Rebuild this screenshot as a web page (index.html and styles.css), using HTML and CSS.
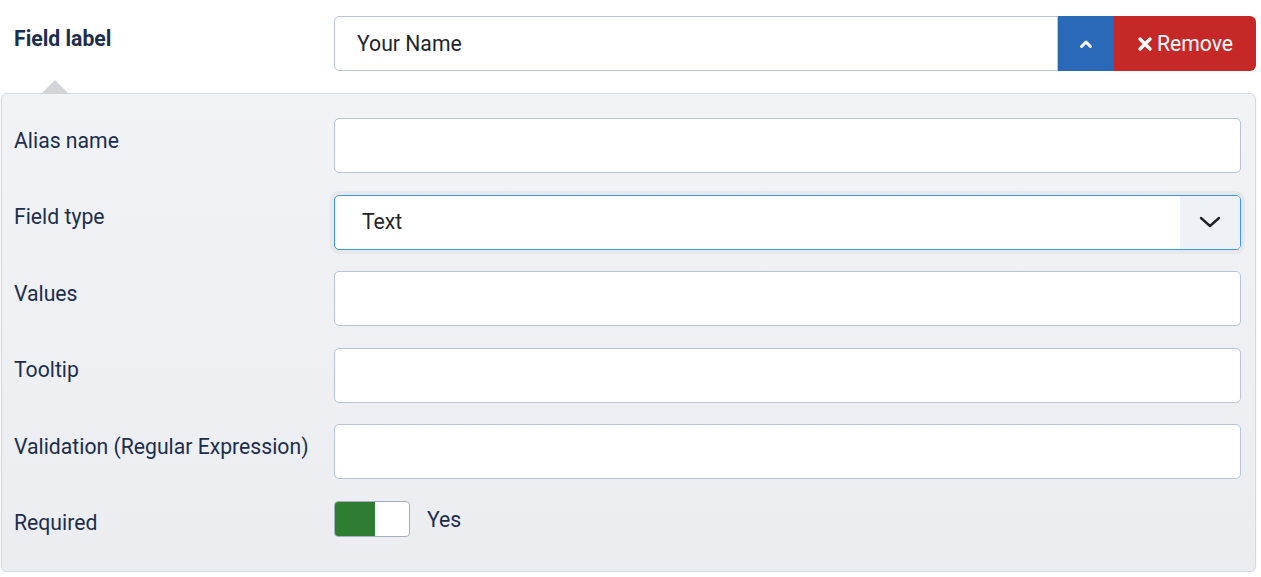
FILE: index.html
```html
<!DOCTYPE html>
<html>

<head>
    <meta name="viewport" content="width=device-width, initial-scale=1">
    <link rel="stylesheet" href="styles.css">
</head>

<body>

    <div class="field-head">
        <label class="head-label" for="fieldLabel">Field label</label>
        <div class="input-group">
            <input type="text" id="fieldLabel" class="form-control" value="Your Name">
            <button class="btn btn-up" type="button" aria-label="Collapse">
                <svg width="14" height="10" viewBox="0 0 14 10">
                    <path d="M2.5 7.5 L7 3 L11.5 7.5" fill="none" stroke="#fff" stroke-width="3" stroke-linecap="round" stroke-linejoin="round" />
                </svg>
            </button>
            <button class="btn btn-remove" type="button">
                <svg width="16" height="16" viewBox="0 0 16 16">
                    <path d="M3 3 L13 13 M13 3 L3 13" fill="none" stroke="#fff" stroke-width="3.4" stroke-linecap="round" />
                </svg>
                Remove
            </button>
        </div>
    </div>

    <div class="panel">
        <div class="row">
            <label for="alias">Alias name</label>
            <input type="text" id="alias" class="form-control">
        </div>
        <div class="row">
            <label for="fieldType">Field type</label>
            <div class="select focused">
                <span class="select-value">Text</span>
                <span class="select-arrow">
                    <svg width="22" height="12" viewBox="0 0 22 12">
                        <path d="M2 2 L11 10 L20 2" fill="none" stroke="#1f2328" stroke-width="2.4" stroke-linecap="round" stroke-linejoin="round" />
                    </svg>
                </span>
            </div>
        </div>
        <div class="row">
            <label for="values">Values</label>
            <input type="text" id="values" class="form-control">
        </div>
        <div class="row">
            <label for="tooltip">Tooltip</label>
            <input type="text" id="tooltip" class="form-control">
        </div>
        <div class="row">
            <label for="validation">Validation (Regular Expression)</label>
            <input type="text" id="validation" class="form-control">
        </div>
        <div class="row">
            <label>Required</label>
            <div class="switch-wrap">
                <span class="switch"><span class="switch-on"></span></span>
                <span class="switch-text">Yes</span>
            </div>
        </div>
    </div>

</body>

</html>
```

FILE: styles.css
```css
body {
    font-family: Roboto, "Liberation Sans", sans-serif;
    font-size: 21.2px;
    line-height: 1.5;
    color: #1c2e4d;
    background-color: #ffffff;
    margin: 0;
    padding: 0;
}

/* Top row with the label input and its buttons */
.field-head {
    display: grid;
    grid-template-columns: 320px 1fr;
    padding: 16px 5px 0 14px;
}

.head-label {
    font-weight: bold;
    padding-top: 7px;
}

.input-group {
    display: flex;
    height: 55px;
}

.form-control {
    font-family: inherit;
    font-size: 21.2px;
    color: #22262a;
    height: 55px;
    padding: 0 22px;
    border: 1px solid #b7c4da;
    border-radius: 5px;
    background-color: #ffffff;
    box-sizing: border-box;
    width: 100%;
    outline: none;
}

.input-group .form-control {
    flex: 1;
    border-radius: 5px 0 0 5px;
}

.btn {
    border: none;
    color: #ffffff;
    font-family: inherit;
    font-size: 21.2px;
    display: flex;
    align-items: center;
    justify-content: center;
    cursor: pointer;
    padding: 0;
}

.btn-up {
    width: 56px;
    background-color: #2a69b8;
}

.btn-remove {
    width: 142px;
    gap: 4px;
    background-color: #c52827;
    border-radius: 0 6px 6px 0;
}

/* Collapsible options panel */
.panel {
    position: relative;
    margin: 22px 5px 0 1px;
    padding: 24px 14px 32px 12px;
    border: 1px solid #d5d8dc;
    border-radius: 6px;
    background: linear-gradient(#f2f3f7, #ebedf0);
    box-shadow: 0 1px 2px rgba(0, 0, 0, 0.08);
    display: flex;
    flex-direction: column;
    gap: 21.5px;
}

.panel::before {
    content: "";
    position: absolute;
    top: -14px;
    left: 39px;
    border-left: 14px solid transparent;
    border-right: 14px solid transparent;
    border-bottom: 14px solid #d3d4d7;
}

.row {
    display: grid;
    grid-template-columns: 320px 1fr;
}

.row label {
    padding-top: 6.5px;
}

/* Select box */
.select {
    display: flex;
    align-items: center;
    height: 55px;
    box-sizing: border-box;
    border: 1px solid #3d95f2;
    border-radius: 5px;
    background-color: #ffffff;
    overflow: hidden;
}

.select.focused {
    box-shadow: 0 0 0 4px #e6e8eb;
}

.select-value {
    flex: 1;
    padding-left: 27px;
    color: #22262a;
}

.select-arrow {
    width: 60px;
    height: 100%;
    background-color: #eef1f6;
    display: flex;
    align-items: center;
    justify-content: center;
}

/* Yes / No switch */
.switch-wrap {
    display: flex;
    align-items: center;
    gap: 17px;
    height: 36px;
}

.switch {
    width: 76px;
    height: 36px;
    box-sizing: border-box;
    border: 1px solid #a4afbb;
    border-radius: 4px;
    background-color: #ffffff;
    overflow: hidden;
    display: flex;
}

.switch-on {
    width: 40px;
    background-color: #2e7d32;
}

.switch-text {
    padding-top: 2px;
}
```
